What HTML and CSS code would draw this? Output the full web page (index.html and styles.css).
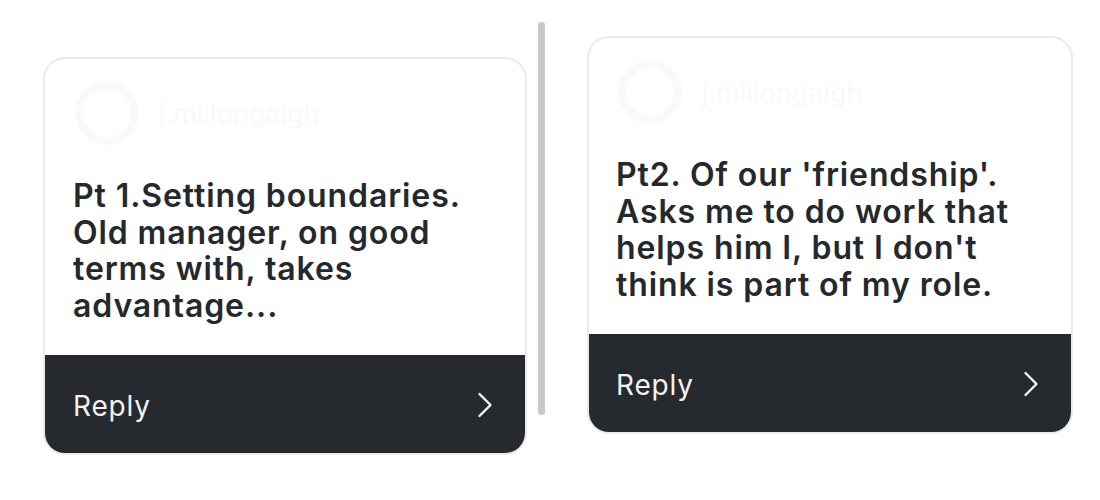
FILE: index.html
```html
<!DOCTYPE html>
<html>
<head>
<meta charset="utf-8">
<link rel="stylesheet" href="styles.css">
</head>
<body>
<div class="page">
  <div class="card card-left">
    <div class="card-body">
      <div class="author">
        <svg class="avatar" width="64" height="64" viewBox="0 0 64 64"><circle cx="32" cy="32" r="28" fill="none" stroke="#f9f9f9" stroke-width="8"/></svg>
        <span class="handle">j.millongaigh</span>
      </div>
      <p class="message">Pt 1.Setting boundaries. Old manager, on good terms with, takes advantage...</p>
    </div>
    <div class="reply-bar">
      <span class="reply">Reply</span>
      <svg class="chev" width="16" height="26" viewBox="0 0 16 26"><path d="M2.5 2 L13.5 13 L2.5 24" fill="none" stroke="#f2f2f2" stroke-width="2.4" stroke-linecap="round" stroke-linejoin="round"/></svg>
    </div>
  </div>
  <div class="divider"></div>
  <div class="card card-right">
    <div class="card-body">
      <div class="author">
        <svg class="avatar" width="64" height="64" viewBox="0 0 64 64"><circle cx="32" cy="32" r="28" fill="none" stroke="#f9f9f9" stroke-width="8"/></svg>
        <span class="handle">j.millongaigh</span>
      </div>
      <p class="message">Pt2. Of our 'friendship'. Asks me to do work that helps him I, but I don't think is part of my role.</p>
    </div>
    <div class="reply-bar">
      <span class="reply">Reply</span>
      <svg class="chev" width="16" height="26" viewBox="0 0 16 26"><path d="M2.5 2 L13.5 13 L2.5 24" fill="none" stroke="#f2f2f2" stroke-width="2.4" stroke-linecap="round" stroke-linejoin="round"/></svg>
    </div>
  </div>
</div>
</body>
</html>
```

FILE: styles.css
```css
html, body {
  margin: 0;
  padding: 0;
  background: #ffffff;
}
body {
  width: 1100px;
  height: 500px;
  overflow: hidden;
  font-family: Inter, "Noto Sans", "Liberation Sans", sans-serif;
}
.page {
  display: flex;
  align-items: flex-start;
  padding-left: 43px;
}
.card {
  box-sizing: border-box;
  height: 398px;
  border: 2px solid #e9eaed;
  border-radius: 22px;
  overflow: hidden;
  display: flex;
  flex-direction: column;
  background: #ffffff;
}
.card-left {
  width: 484px;
  margin-top: 57px;
}
.card-right {
  width: 486px;
  margin-top: 36px;
}
.divider {
  width: 7px;
  height: 393px;
  margin-top: 22px;
  margin-left: 11px;
  margin-right: 42px;
  background: #c9c9ca;
  border-radius: 3px;
}
.card-body {
  flex: 1;
  padding: 22px 0 0 28px;
}
.card-right .card-body {
  padding-left: 27px;
}
.author {
  display: flex;
  align-items: center;
  gap: 20px;
  margin-left: 2px;
  height: 64px;
}
.avatar {
  display: block;
}
.handle {
  font-size: 27px;
  color: #f9f9f9;
  font-weight: 400;
}
.message {
  margin: 33px 0 0 0;
  width: 400px;
  font-size: 32px;
  line-height: 36.7px;
  font-weight: 600;
  color: #25282c;
  letter-spacing: 0.9px;
}
.reply-bar {
  height: 98px;
  flex: none;
  background: #26292d;
  display: flex;
  align-items: center;
  justify-content: space-between;
  padding: 0 32px 0 28px;
}
.card-right .reply-bar {
  padding-left: 27px;
}
.reply {
  font-size: 28px;
  color: #f2f2f2;
  font-weight: 400;
  letter-spacing: 0.8px;
  margin-top: 4px;
}
.chev {
  display: block;
  margin-top: 2px;
}
```
